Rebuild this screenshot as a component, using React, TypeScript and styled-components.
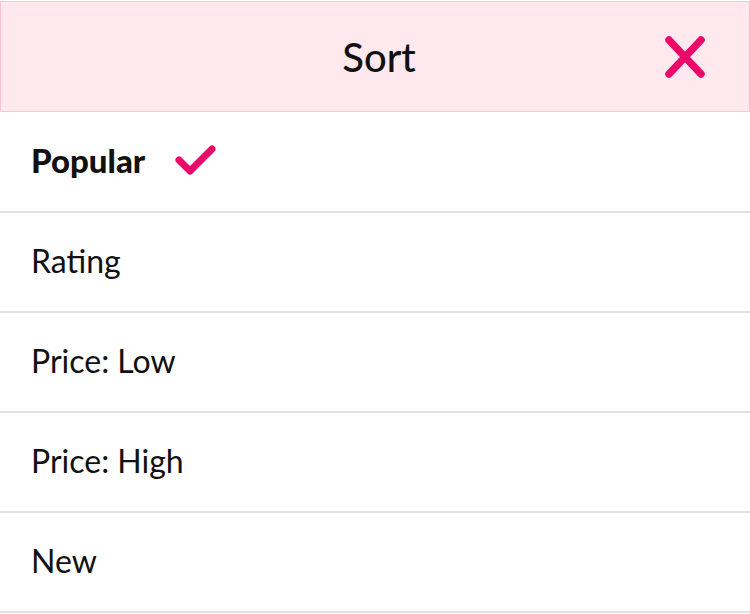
import React from "react";
import styled, { createGlobalStyle } from "styled-components";

const Global = createGlobalStyle`
  html, body { margin: 0; padding: 0; background: #ffffff; }
  body { font-family: "Lato", "Liberation Sans", sans-serif; color: #111111; }
`;

const Sheet = styled.div`
  width: 750px;
  padding-top: 1px;
  display: flex;
  flex-direction: column;
`;

const Header = styled.div`
  position: relative;
  height: 109px;
  display: flex;
  align-items: center;
  justify-content: center;
  background: #ffe8ee;
  border: 1px solid #ffc4d4;
  margin-bottom: 1px;
`;

const Title = styled.h1`
  margin: 0;
  font-size: 40px;
  font-weight: 500;
  color: #111111;
  transform: translateX(4px);
`;

const CloseButton = styled.button`
  position: absolute;
  right: 42px;
  top: 50%;
  transform: translateY(-50%);
  width: 44px;
  height: 44px;
  padding: 0;
  border: none;
  background: transparent;
  display: flex;
  align-items: center;
  justify-content: center;
  cursor: pointer;
`;

const List = styled.ul`
  list-style: none;
  margin: 0;
  padding: 0;
`;

const Row = styled.li<{ $active?: boolean }>`
  box-sizing: border-box;
  height: 100px;
  display: flex;
  align-items: center;
  gap: 30px;
  padding: 0 31px 4px;
  border-bottom: 2px solid #e0e0e0;
  font-size: ${(p) => (p.$active ? "33px" : "32px")};
  font-weight: ${(p) => (p.$active ? 900 : 400)};
  color: #111111;
`;

const CheckIcon = styled.svg`
  margin-top: 2px;
`;

const PINK = "#ec0868";

const options = ["Popular", "Rating", "Price: Low", "Price: High", "New"];

export default function App() {
  const selected = "Popular";
  return (
    <>
      <Global />
      <Sheet>
        <Header>
          <Title>Sort</Title>
          <CloseButton aria-label="Close">
            <svg width="44" height="44" viewBox="0 0 44 44">
              <path
                d="M6 5 L38 39 M38 5 L6 39"
                stroke={PINK}
                strokeWidth="7.5"
                strokeLinecap="round"
                fill="none"
              />
            </svg>
          </CloseButton>
        </Header>
        <List>
          {options.map((o) => (
            <Row key={o} $active={o === selected}>
              <span>{o}</span>
              {o === selected && (
                <CheckIcon width="42" height="32" viewBox="0 0 42 32">
                  <path
                    d="M4 15 L15 26 L37 4"
                    stroke={PINK}
                    strokeWidth="7"
                    strokeLinecap="round"
                    strokeLinejoin="round"
                    fill="none"
                  />
                </CheckIcon>
              )}
            </Row>
          ))}
        </List>
      </Sheet>
    </>
  );
}
